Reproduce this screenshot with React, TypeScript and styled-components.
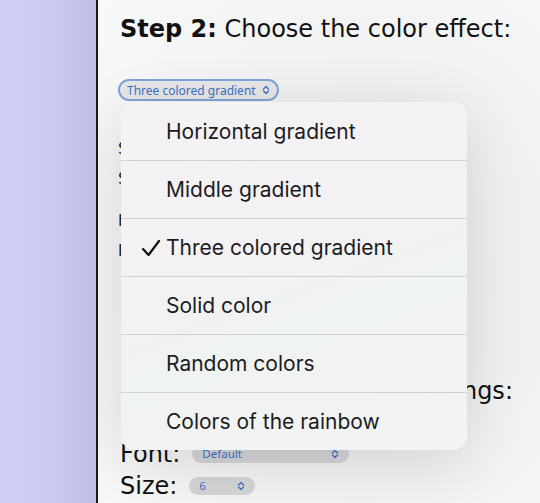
import { createGlobalStyle } from "styled-components";
import styled from "styled-components";

const options = [
  "Horizontal gradient",
  "Middle gradient",
  "Three colored gradient",
  "Solid color",
  "Random colors",
  "Colors of the rainbow",
];
const selected = "Three colored gradient";

export default function App() {
  return (
    <>
      <GlobalStyle />
      <Page>
        <Sidebar />
        <Content>
          <Heading>
            <b>Step 2:</b> Choose the color effect:
          </Heading>
          <PickerRow>
            <Picker $focused>
              Three colored gradient <Chevron />
            </Picker>
          </PickerRow>
          <Hidden>
            <Group>
              <Line>Start color: red</Line>
              <Line>Second color: green</Line>
            </Group>
            <Group>
              <Line>l Third color: blue</Line>
              <Line>l Intensity: 100%</Line>
            </Group>
          </Hidden>
          <Heading>
            <b>Step 3:</b> Adjust the text settings:
          </Heading>
          <Fields>
            <Field>
              Font:
              <Picker $width={157}>
                Default <Chevron />
              </Picker>
            </Field>
            <Field>
              Size:
              <Picker $width={66}>
                6 <Chevron />
              </Picker>
            </Field>
          </Fields>
          <Menu>
            {options.map((o) => (
              <MenuItem key={o}>
                <Check>{o === selected && <Tick />}</Check>
                {o}
              </MenuItem>
            ))}
          </Menu>
        </Content>
      </Page>
    </>
  );
}

function Chevron() {
  return (
    <svg width="8" height="10" viewBox="0 0 8 10">
      <path
        d="M1.5 4 L4 1.5 L6.5 4 M1.5 6 L4 8.5 L6.5 6"
        fill="none"
        stroke="#3d72c4"
        strokeWidth="1.4"
        strokeLinecap="round"
        strokeLinejoin="round"
      />
    </svg>
  );
}

function Tick() {
  return (
    <svg width="20" height="18" viewBox="0 0 20 18">
      <path
        d="M2 10 L7.5 16 L18 2"
        fill="none"
        stroke="#111"
        strokeWidth="2.2"
        strokeLinecap="round"
        strokeLinejoin="round"
      />
    </svg>
  );
}

const GlobalStyle = createGlobalStyle`
  html, body { margin: 0; padding: 0; }
  body {
    width: 540px;
    height: 503px;
    overflow: hidden;
    font-family: "DejaVu Sans", Verdana, sans-serif;
  }
`;

const Page = styled.div`
  display: grid;
  grid-template-columns: 98px 1fr;
  height: 503px;
`;

const Sidebar = styled.div`
  background: linear-gradient(90deg, #cfcff7 0%, #c9c9f1 60%, #bdbde6 100%);
  border-right: 2px solid #1a1a1a;
`;

const Content = styled.div`
  position: relative;
  padding: 13px 0 0 22px;
  background: radial-gradient(
    ellipse at 60% 55%,
    #e9e9e9 0%,
    #f0f0f0 45%,
    #f9f9f9 100%
  );
  color: #111;
  overflow: hidden;
`;

const Heading = styled.div`
  font-size: 24px;
  line-height: 32px;
  white-space: nowrap;
  b {
    font-weight: 700;
  }
`;

const PickerRow = styled.div`
  margin-top: 34px;
  height: 22px;
`;

const Hidden = styled.div`
  height: 274px;
  padding-top: 35px;
  margin-left: -2px;
  box-sizing: border-box;
  display: flex;
  flex-direction: column;
  gap: 16px;
`;

const Group = styled.div`
  display: flex;
  flex-direction: column;
  gap: 4px;
`;

const Line = styled.div`
  font-size: 16px;
  line-height: 26px;
  white-space: nowrap;
`;

const Picker = styled.span<{ $focused?: boolean; $width?: number }>`
  display: inline-flex;
  align-items: center;
  justify-content: space-between;
  gap: 6px;
  box-sizing: border-box;
  width: ${(p) => (p.$width ? `${p.$width}px` : "auto")};
  height: ${(p) => (p.$focused ? "22px" : "18px")};
  padding: 0 ${(p) => (p.$focused ? "7px" : "10px")};
  margin-left: ${(p) => (p.$focused ? "-2px" : "0")};
  border-radius: 11px;
  background: ${(p) => (p.$focused ? "#e6e6e8" : "#d4d4d6")};
  border: ${(p) => (p.$focused ? "2.5px solid #7fa4d8" : "none")};
  color: #3d72c4;
  font-family: "Noto Sans", Inter, sans-serif;
  font-size: ${(p) => (p.$focused ? "12px" : "11.5px")};
  vertical-align: middle;
`;

const Fields = styled.div`
  margin-top: 31px;
  display: flex;
  flex-direction: column;
`;

const Field = styled.div`
  display: flex;
  align-items: center;
  gap: 12px;
  font-size: 24px;
  line-height: 32px;
`;

const Menu = styled.div`
  position: absolute;
  left: 23px;
  top: 102px;
  width: 346px;
  border-radius: 14px;
  background: linear-gradient(
    160deg,
    #f5f2f4 0%,
    #f3f1f4 40%,
    #eff3f1 60%,
    #f3f3f3 100%
  );
  box-shadow: 0 12px 60px rgba(0, 0, 0, 0.12);
  overflow: hidden;
`;

const MenuItem = styled.div`
  display: flex;
  align-items: center;
  height: 58px;
  box-sizing: border-box;
  padding-left: 20px;
  font-family: Inter, "Noto Sans", sans-serif;
  font-size: 21px;
  font-weight: 400;
  color: #1c1c1e;
  & + & {
    border-top: 1px solid #d2d2d4;
  }
`;

const Check = styled.span`
  display: flex;
  align-items: center;
  width: 25px;
`;
